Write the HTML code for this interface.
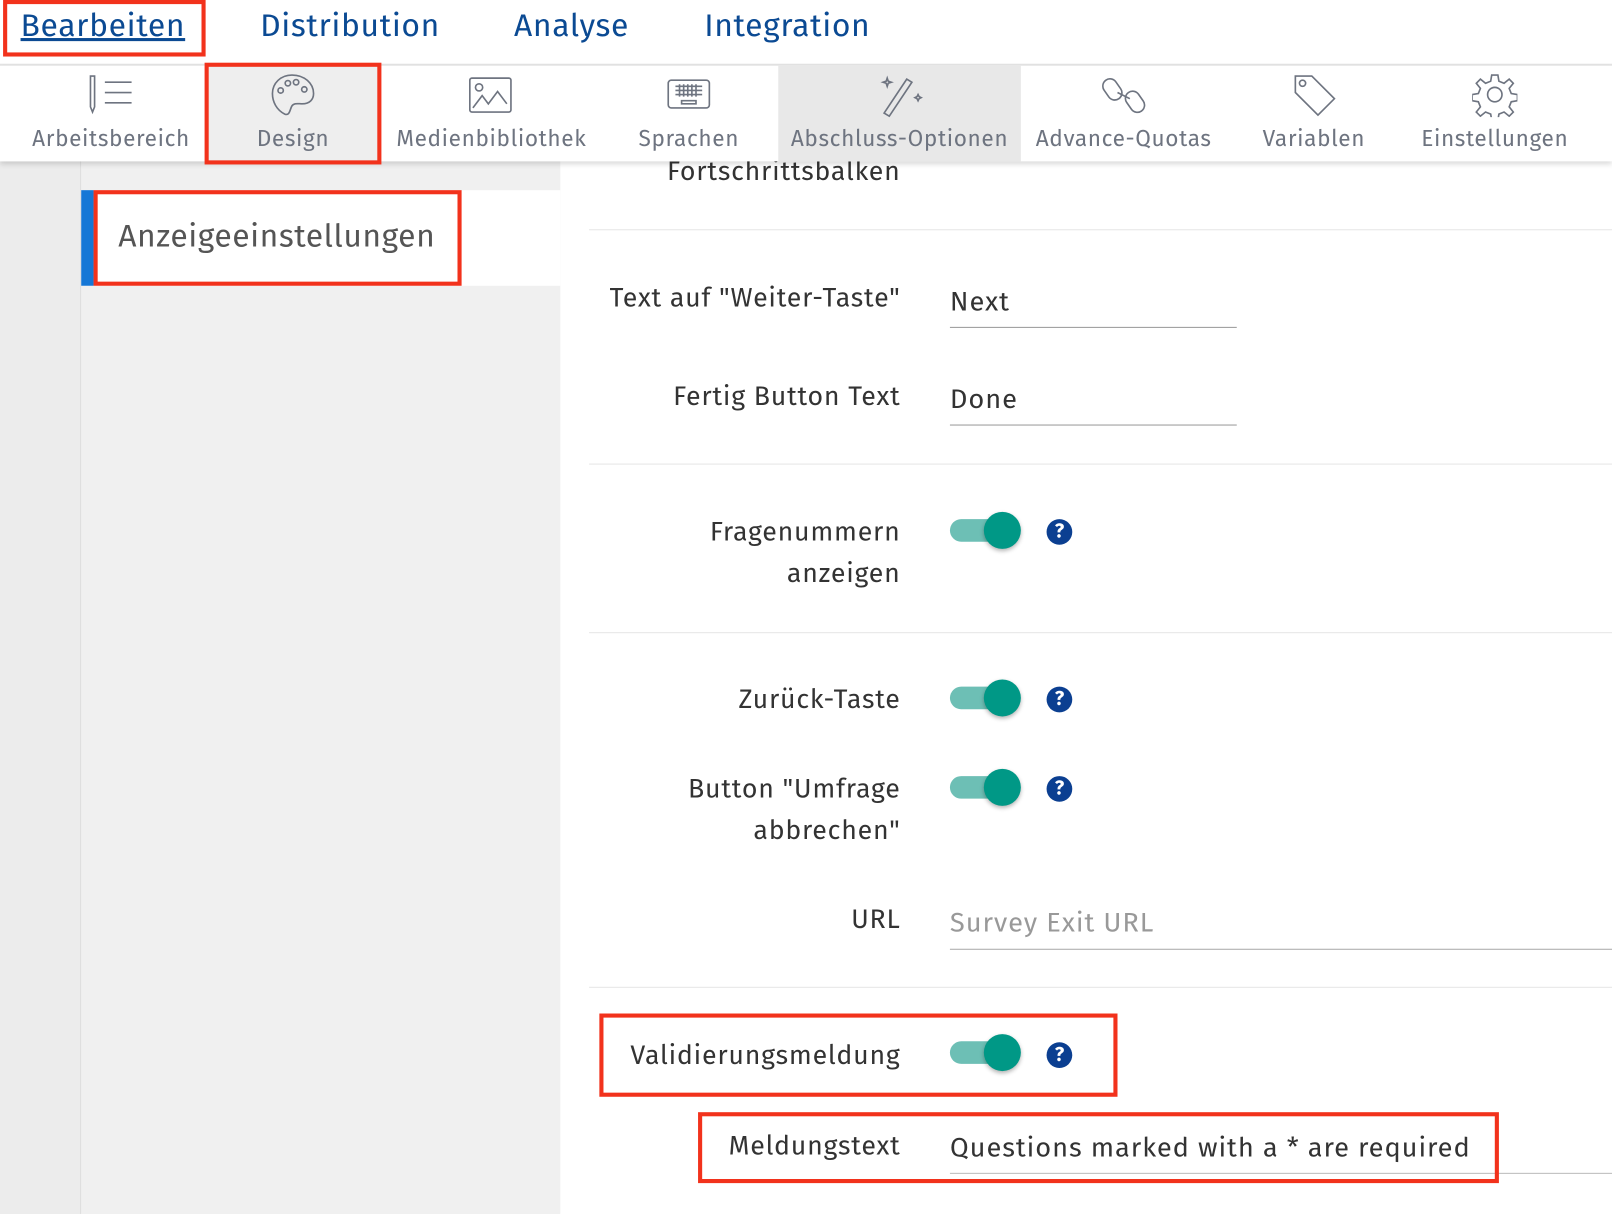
<!DOCTYPE html>
<html><head><meta charset="utf-8"><style>
html,body{margin:0;padding:0;width:1612px;height:1214px;overflow:hidden;background:#fff;font-family:"Fira Sans","Liberation Sans",sans-serif}
#w{position:absolute;left:0;top:0;width:1568px;height:1181px;transform:scale(1.02806,1.0279);transform-origin:0 0;background:#fff}
.a{position:absolute}
.tab{position:absolute;top:7px;font-size:31px;color:#0b4a93;letter-spacing:.6px}
.tb{position:absolute;top:121px;font-size:22px;color:#6e7480;text-align:center;letter-spacing:.6px}
.lbl{position:absolute;right:692px;font-size:26px;color:#333;text-align:right;line-height:40px;letter-spacing:.75px}
.val{position:absolute;left:924px;font-size:26.5px;color:#333;letter-spacing:.9px}
.ul{position:absolute;height:1px;background:#999}
.hr{position:absolute;left:573px;right:0;height:1px;background:#e6e6e6}
.tg{position:absolute;left:924px;width:68px;height:22px;border-radius:11px;background:#6dbfb5}
.tg::after{content:"";position:absolute;left:33px;top:-7px;width:36px;height:36px;border-radius:50%;background:#009886;box-shadow:0 2px 4px rgba(0,0,0,.3)}
.q{position:absolute;left:1018px;width:25px;height:25px;border-radius:50%;background:#0b3f91;color:#fff;font-weight:bold;font-size:19px;line-height:25px;text-align:center}
.red{position:absolute;border:4px solid #f2321c;box-sizing:border-box}
svg{position:absolute;fill:none;stroke:#6e7480;stroke-width:1.6}
</style></head><body><div id="w">
<div class="tab" style="left:20px;text-decoration:underline">Bearbeiten</div>
<div class="tab" style="left:253px">Distribution</div>
<div class="tab" style="left:500px">Analyse</div>
<div class="tab" style="left:685px">Integration</div>
<div class="a" style="left:0;top:62px;width:1568px;height:2px;background:#e2e2e2"></div>
<div class="a" style="left:0;top:64px;width:1568px;height:93px;background:#fff;box-shadow:0 3px 5px rgba(0,0,0,.15);z-index:2">
 <div class="a" style="left:200px;top:0;width:170px;height:93px;background:#eee"></div>
 <div class="a" style="left:757px;top:0;width:236px;height:93px;background:#e8e8e8"></div>
</div>
<div style="position:absolute;left:0;top:0;width:1568px;height:160px;z-index:3">
<svg style="left:85px;top:72px" width="46" height="40"><path d="M3 2h4v30l-2 5-2-5z"/><path d="M17 8h26M17 18h26M17 28h26"/></svg>
<svg style="left:262px;top:70px" width="46" height="46"><path d="M22 3C11 3 3 11 3 21c0 8 4 16 12 20 5 2 5-5 7-8 2-3 6-2 10-2 7 0 11-4 11-10C43 11 34 3 22 3z"/><circle cx="18" cy="11" r="2.6"/><circle cx="26" cy="10" r="2.6"/><circle cx="11" cy="18" r="2.6"/><circle cx="34" cy="17" r="2.6"/></svg>
<svg style="left:455px;top:74px" width="44" height="38"><rect x="2" y="2" width="40" height="33" rx="2"/><circle cx="11" cy="11" r="3.5"/><path d="M5 31l9-12 6 8 9-12 9 12"/></svg>
<svg style="left:648px;top:76px" width="44" height="32"><rect x="2" y="2" width="40" height="27" rx="3"/><path d="M9 8h26M9 12h26M9 16h26M13 6v12M17 6v12M21 6v12M25 6v12M29 6v12M15 22h14v3H15z"/></svg>
<svg style="left:855px;top:70px" width="44" height="46"><path d="M5 40l22-33 5 3-22 33z"/><path d="M8 6l1 3 3 1-3 1-1 3-1-3-3-1 3-1zM38 22l1 2 2 1-2 1-1 2-1-2-2-1 2-1z"/></svg>
<svg style="left:1072px;top:70px" width="46" height="46"><rect x="3" y="6" width="14" height="22" rx="7" transform="rotate(-35 10 17)"/><rect x="25" y="18" width="14" height="22" rx="7" transform="rotate(-35 32 29)"/><path d="M15 20l12 6"/></svg>
<svg style="left:1256px;top:70px" width="46" height="46"><path d="M4 4h16l22 22-16 16L4 20z"/><circle cx="11" cy="11" r="3"/></svg>
<svg style="left:1432px;top:70px" width="44" height="44"><circle cx="22" cy="22" r="7"/><path d="M19 3h6l1 6 5 2 5-4 4 4-4 5 2 5 6 1v6l-6 1-2 5 4 5-4 4-5-4-5 2-1 6h-6l-1-6-5-2-5 4-4-4 4-5-2-5-6-1v-6l6-1 2-5-4-5 4-4 5 4 5-2z"/></svg>
<div class="tb" style="left:18px;width:180px">Arbeitsbereich</div>
<div class="tb" style="left:200px;width:170px">Design</div>
<div class="tb" style="left:378px;width:200px">Medienbibliothek</div>
<div class="tb" style="left:590px;width:160px">Sprachen</div>
<div class="tb" style="left:757px;width:236px">Abschluss-Optionen</div>
<div class="tb" style="left:995px;width:196px">Advance-Quotas</div>
<div class="tb" style="left:1200px;width:156px">Variablen</div>
<div class="tb" style="left:1370px;width:168px">Einstellungen</div>
</div>
<div class="red" style="left:3px;top:0;width:197px;height:55px;z-index:4"></div>
<div class="red" style="left:199px;top:61px;width:172px;height:99px;z-index:4"></div>
<div class="a" style="left:0;top:157px;width:78px;height:1024px;background:#ececec;border-right:1px solid #dcdcdc"></div>
<div class="a" style="left:79px;top:157px;width:466px;height:1024px;background:#f0f0f0"></div>
<div class="a" style="left:79px;top:185px;width:466px;height:93px;background:#fff"></div>
<div class="a" style="left:79px;top:185px;width:12px;height:93px;background:#1577d6"></div>
<div class="a" style="left:115px;top:212px;font-size:31px;color:#555;letter-spacing:.5px">Anzeigeeinstellungen</div>
<div class="red" style="left:91px;top:185px;width:358px;height:93px"></div>
<div class="lbl" style="top:147px">Fortschrittsbalken</div>
<div class="hr" style="top:223px"></div>
<div class="lbl" style="top:270px">Text auf "Weiter-Taste"</div>
<div class="val" style="top:278px">Next</div><div class="ul" style="left:924px;width:279px;top:318px"></div>
<div class="lbl" style="top:366px">Fertig Button Text</div>
<div class="val" style="top:373px">Done</div><div class="ul" style="left:924px;width:279px;top:413px"></div>
<div class="hr" style="top:451px"></div>
<div class="lbl" style="top:498px">Fragenummern<br>anzeigen</div>
<div class="tg" style="top:505px"></div><div class="q" style="top:505px">?</div>
<div class="hr" style="top:615px"></div>
<div class="lbl" style="top:661px">Zurück-Taste</div>
<div class="tg" style="top:668px"></div><div class="q" style="top:668px">?</div>
<div class="lbl" style="top:748px">Button "Umfrage<br>abbrechen"</div>
<div class="tg" style="top:755px"></div><div class="q" style="top:755px">?</div>
<div class="lbl" style="top:875px">URL</div>
<div class="val" style="top:882px;color:#999">Survey Exit URL</div><div class="ul" style="left:924px;right:0;top:923px;background:#aaa"></div>
<div class="hr" style="top:960px"></div>
<div class="lbl" style="top:1007px">Validierungsmeldung</div>
<div class="tg" style="top:1013px"></div><div class="q" style="top:1014px">?</div>
<div class="red" style="left:583px;top:986px;width:504px;height:81px"></div>
<div class="lbl" style="top:1095px">Meldungstext</div>
<div class="val" style="top:1101px">Questions marked with a * are required</div><div class="ul" style="left:924px;right:0;top:1141px;background:#bbb"></div>
<div class="red" style="left:679px;top:1082px;width:779px;height:69px"></div>
</div></body></html>
